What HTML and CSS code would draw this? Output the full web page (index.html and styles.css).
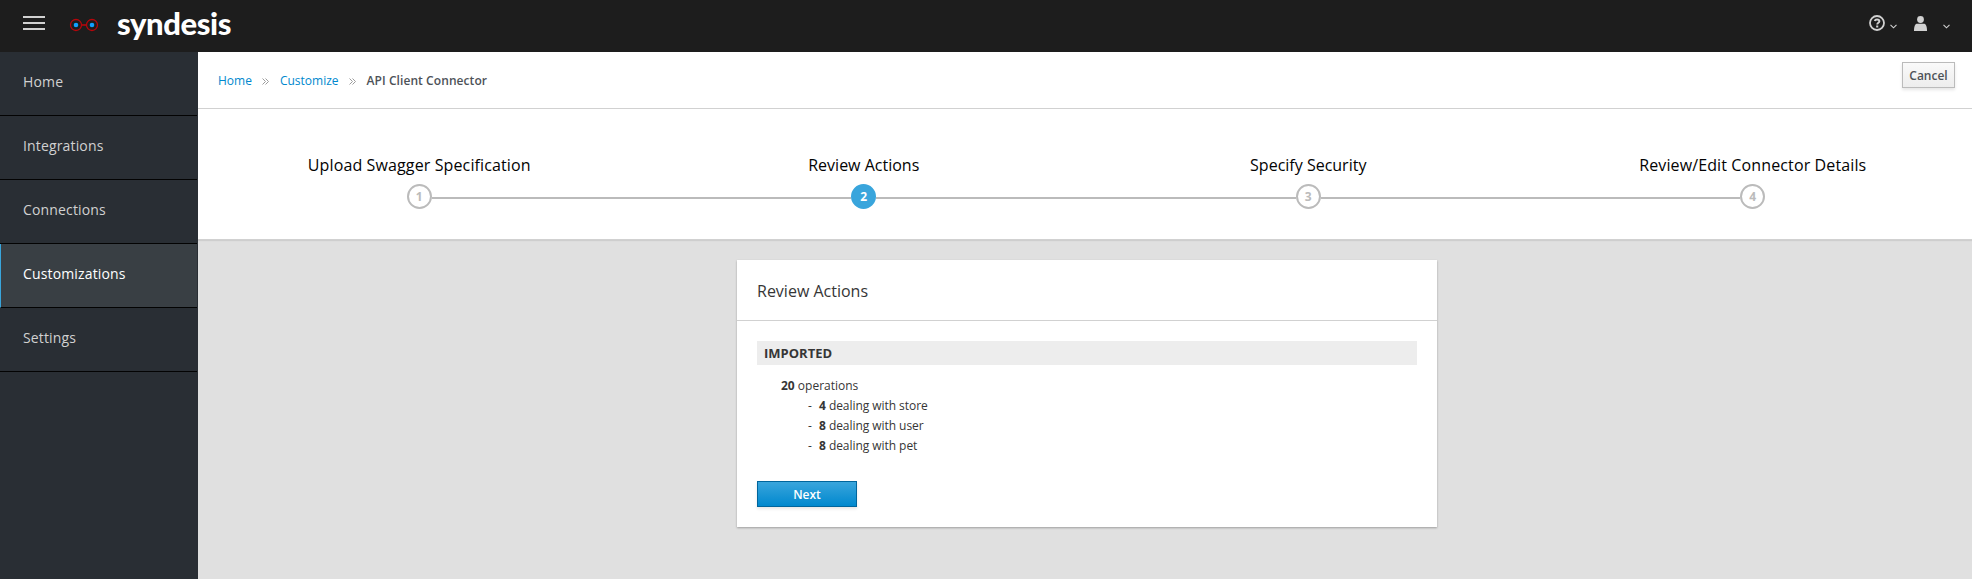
FILE: index.html
```html
<!DOCTYPE html>
<html lang="en">
<head>
<meta charset="utf-8">
<title>Syndesis</title>
<link rel="stylesheet" href="styles.css">
</head>
<body>
<header class="masthead">
  <div class="brand">
    <div class="menu-toggle"><span></span><span></span><span></span></div>
    <svg class="glasses" width="30" height="14" viewBox="0 0 30 14" fill="none">
      <circle cx="7" cy="7" r="5.500" stroke="#b5060b" stroke-width="1.300"/>
      <circle cx="23" cy="7" r="5.500" stroke="#b5060b" stroke-width="1.300"/>
      <path d="M12.500 7h5" stroke="#b5060b" stroke-width="1.600"/>
      <circle cx="7" cy="7" r="2.300" fill="#109fff"/>
      <circle cx="23" cy="7" r="2.300" fill="#109fff"/>
    </svg>
    <span class="wordmark">syndesis</span>
  </div>
  <div class="tools">
    <svg class="help" width="16" height="16" viewBox="0 0 16 16" fill="none" stroke="#d1d1d1">
      <circle cx="8" cy="8" r="7" stroke-width="1.800"/>
      <path d="M5.700 6.100C6 5 6.900 4.500 8 4.500c1.400 0 2.400.7 2.400 1.800 0 1.500-2.200 1.500-2.200 3.100" stroke-width="1.900"/>
      <path d="M8.200 10.500v2" stroke-width="2.100"/>
    </svg>
    <svg class="caret" width="7" height="5" viewBox="0 0 7 5" fill="none" stroke="#d1d1d1"><path d="M.5 .8l3 3 3-3" stroke-width="1.100"/></svg>
    <svg class="user" width="13" height="15" viewBox="0 0 13 15" fill="#d1d1d1">
      <circle cx="6.500" cy="3.500" r="3.400"/>
      <path d="M0 15c0-4.500 1-7.200 3.200-7.200h6.600C12 7.800 13 10.500 13 15z"/>
    </svg>
    <svg class="caret" width="7" height="5" viewBox="0 0 7 5" fill="none" stroke="#d1d1d1"><path d="M.5 .8l3 3 3-3" stroke-width="1.100"/></svg>
  </div>
</header>
<div class="layout">
  <nav class="sidebar">
    <a class="nav-item">Home</a>
    <a class="nav-item">Integrations</a>
    <a class="nav-item">Connections</a>
    <a class="nav-item active">Customizations</a>
    <a class="nav-item">Settings</a>
  </nav>
  <main class="content">
    <div class="toolbar">
      <div class="breadcrumb">
        <a>Home</a>
        <svg class="sep" width="7" height="7" viewBox="0 0 7 7" fill="none" stroke="#9c9c9c"><path d="M.5 .5l3 3-3 3M3.500 .5l3 3-3 3"/></svg>
        <a>Customize</a>
        <svg class="sep" width="7" height="7" viewBox="0 0 7 7" fill="none" stroke="#9c9c9c"><path d="M.5 .5l3 3-3 3M3.500 .5l3 3-3 3"/></svg>
        <strong>API Client Connector</strong>
      </div>
      <button class="btn btn-default">Cancel</button>
    </div>
    <div class="wizard">
      <ol class="steps">
        <li class="step"><span class="step-title long">Upload Swagger Specification</span><span class="step-track"><b class="num">1</b></span></li>
        <li class="step current"><span class="step-title">Review Actions</span><span class="step-track"><b class="num">2</b></span></li>
        <li class="step"><span class="step-title">Specify Security</span><span class="step-track"><b class="num">3</b></span></li>
        <li class="step"><span class="step-title long">Review/Edit Connector Details</span><span class="step-track"><b class="num">4</b></span></li>
      </ol>
    </div>
    <section class="card">
      <h2 class="card-title">Review Actions</h2>
      <div class="card-body">
        <h3 class="section-title">IMPORTED</h3>
        <div class="operations">
          <p><b>20</b> operations</p>
          <ul>
            <li><b>4</b> dealing with store</li>
            <li><b>8</b> dealing with user</li>
            <li><b>8</b> dealing with pet</li>
          </ul>
        </div>
        <button class="btn btn-primary">Next</button>
      </div>
    </section>
  </main>
</div>
</body>
</html>
```

FILE: styles.css
```css
* { box-sizing: border-box; }
body {
  margin: 0;
  height: 579px;
  display: flex;
  flex-direction: column;
  overflow: hidden;
  background: #e0e0e0;
  color: #363636;
  font: 12px/20px "Open Sans", sans-serif;
}
h2, h3, p, ul, ol { margin: 0; padding: 0; list-style: none; }

.masthead {
  flex: none;
  display: flex;
  justify-content: space-between;
  height: 52px;
  background: #1d1d1d;
}
.brand { display: flex; align-items: flex-start; padding-left: 23px; }
.menu-toggle { display: grid; gap: 4px; width: 22px; margin: 16px 24px 0 0; }
.menu-toggle span { height: 2px; background: #d1d1d1; }
.glasses { margin: 18px 18px 0 0; }
.wordmark {
  color: #fff;
  font: 900 31px/40px Lato, sans-serif;
  letter-spacing: -.4px;
  padding-top: 3px;
}
.tools { display: flex; align-items: flex-start; padding-right: 22px; }
.help { margin-top: 15px; }
.caret { margin: 24px 0 0 5px; }
.user { margin: 16px 11px 0 17px; }

.layout { flex: 1; display: flex; min-height: 0; }
.sidebar { flex: none; width: 198px; background: #292e34; border-right: 1px solid #292e34; }
.nav-item {
  display: block;
  height: 64px;
  padding: 20px 0 0 23px;
  border-bottom: 1px solid #030303;
  color: #d1d1d1;
  font-size: 14px;
  letter-spacing: .15px;
}
.nav-item.active {
  padding-left: 22px;
  border-left: 1px solid #39a5dc;
  background: #393f44;
  color: #fff;
}

.content { flex: 1; min-width: 0; overflow: hidden; }
.toolbar {
  display: flex;
  justify-content: space-between;
  align-items: flex-start;
  height: 57px;
  padding: 10px 17px 0 20px;
  background: #fff;
  border-bottom: 1px solid #d1d1d1;
}
.breadcrumb { display: flex; align-items: center; padding-top: 9px; }
.breadcrumb a { color: #0088ce; }
.breadcrumb strong { color: #4d5258; font-weight: 600; letter-spacing: .07px; }
.sep { margin: 1px 11px 0 10px; }
.btn {
  height: 26px;
  padding: 1px 6px 0;
  border: 1px solid #bbb;
  font: 600 12px/20px "Open Sans", sans-serif;
  box-shadow: 0 2px 3px rgba(3, 3, 3, .1);
}
.btn-default { width: 53px; color: #4d5258; background: linear-gradient(#fafafa, #ededed); }
.btn-primary {
  display: block;
  width: 100px;
  border-color: #00659c;
  color: #fff;
  background: linear-gradient(#39a5dc, #0088ce);
}

.wizard {
  height: 131px;
  padding-top: 46px;
  background: #fff;
  border-bottom: 1px solid #d1d1d1;
  box-shadow: 0 1px 1px rgba(3, 3, 3, .08);
}
.steps { display: flex; margin: 0 -3px 0 -1px; }
.step { flex: 1; text-align: center; }
.step-title { display: block; color: #030303; font-size: 16px; line-height: 20px; }
.step-title.long { letter-spacing: .12px; }
.step-track { display: flex; align-items: center; height: 25px; margin-top: 9px; }
.step-track::before, .step-track::after { content: ""; flex: 1; height: 2px; margin-top: 3px; background: #bbb; }
.step:first-child .step-track::before, .step:last-child .step-track::after { background: none; }
.num {
  width: 25px;
  height: 25px;
  border: 2px solid #bbb;
  border-radius: 50%;
  color: #bbb;
  font-size: 12px;
  line-height: 22px;
}
.current .num { background: #39a5dc; border-color: #39a5dc; color: #fff; }

.card {
  width: 700px;
  height: 267px;
  margin: 20px 0 0 539px;
  background: #fff;
  box-shadow: 0 1px 2px rgba(3, 3, 3, .3);
}
.card-title {
  height: 61px;
  padding: 21px 20px 0;
  border-bottom: 1px solid #d1d1d1;
  font-size: 16px;
  font-weight: 400;
}
.card-body { padding: 20px; }
.section-title { height: 24px; padding-left: 7px; background: #ededed; font: 700 13px/25px "Open Sans", sans-serif; }
.operations { padding: 11px 0 25px 24px; }
.operations li { padding-left: 27px; letter-spacing: -.05px; }
.operations li::before { content: "-"; display: inline-block; width: 11px; }
```
